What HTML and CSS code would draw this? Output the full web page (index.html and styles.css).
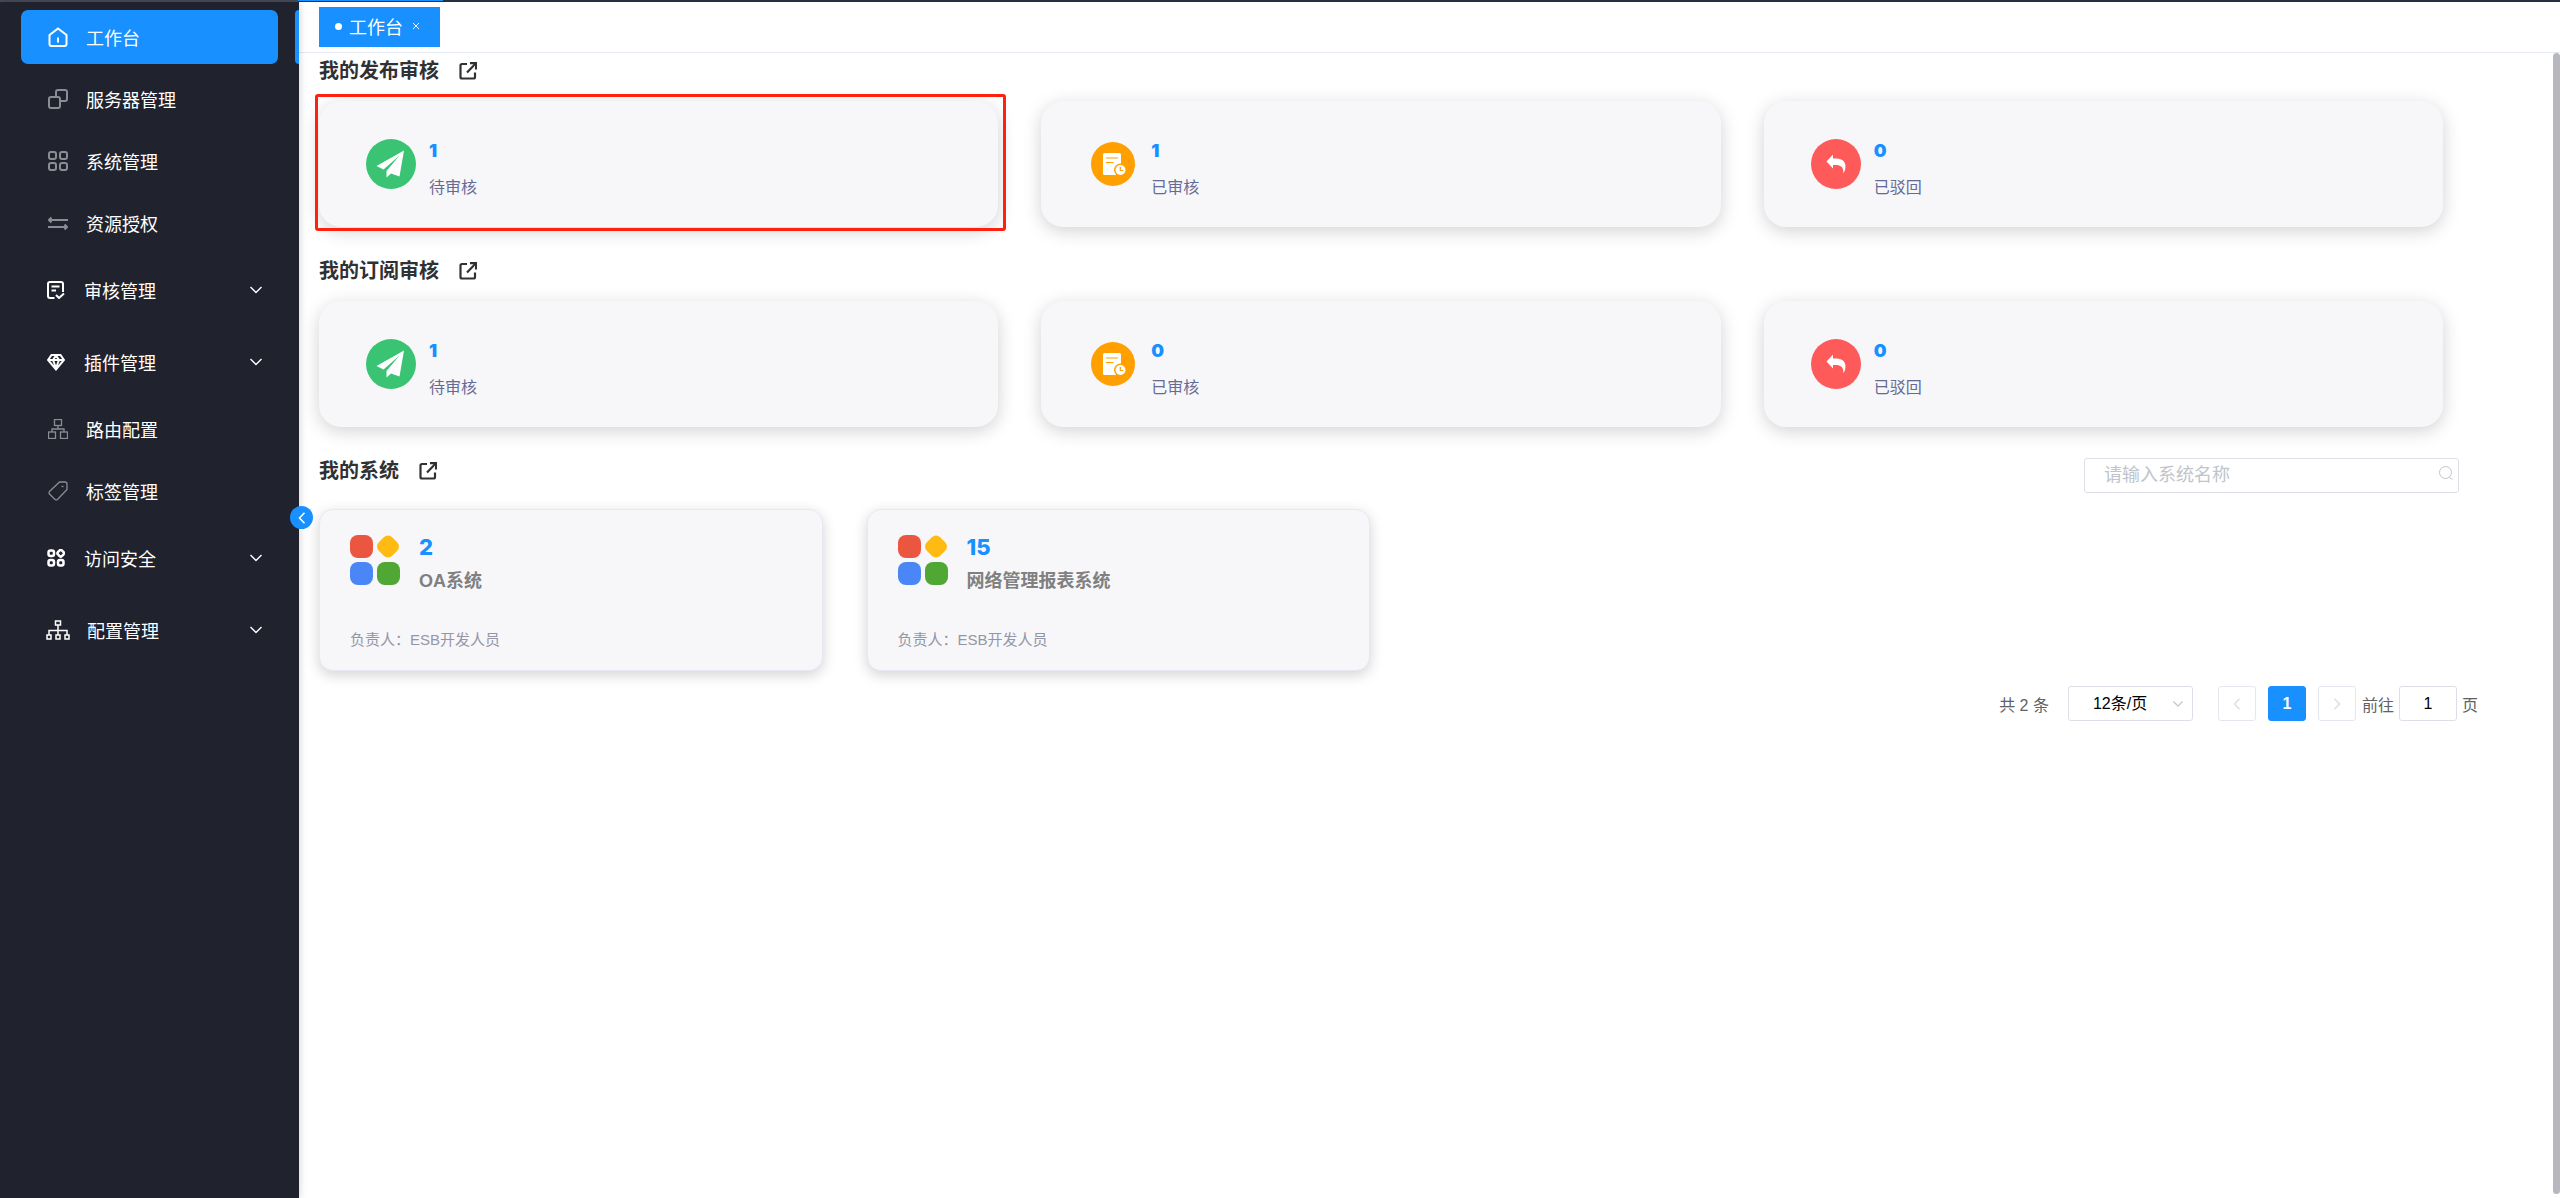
FILE: index.html
```html
<!DOCTYPE html>
<html lang="zh-CN">

<head>
	<meta charset="utf-8">
	<title>工作台</title>
	<link rel="stylesheet" href="styles.css">
</head>

<body>
	<svg class="defs" width="0" height="0">
		<symbol id="i-open" viewBox="0 0 18 18"><path d="M8 2H3Q1.500 2 1.500 3.500V15Q1.500 16.500 3 16.500H14.500Q16 16.500 16 15V10.500M11 1.200H17V7.500M16.500 1.800L8 10.500" fill="none" stroke="currentColor" stroke-width="2.200"/></symbol>
		<symbol id="i-down" viewBox="0 0 12 8"><path d="M.5 1L6 6.500L11.500 1" fill="none" stroke="currentColor" stroke-width="1.400"/></symbol>
		<symbol id="i-left" viewBox="0 0 8 12"><path d="M6.500 .8L1.500 6L6.500 11.200" fill="none" stroke="currentColor" stroke-width="1.500"/></symbol>
		<symbol id="i-right" viewBox="0 0 8 12"><path d="M1.500 .8L6.500 6L1.500 11.200" fill="none" stroke="currentColor" stroke-width="1.500"/></symbol>
		<symbol id="i-plane" viewBox="0 0 50 50"><circle cx="25" cy="25" r="25" fill="#3bc374"/><path d="M38 11.500L10.500 27L17.500 30.500L33.500 16.500L20.500 32V38.500L25 34.500L33.500 37.500Z" fill="#fff"/></symbol>
		<symbol id="i-doc" viewBox="0 0 44 44"><circle cx="22" cy="22" r="22" fill="#ffa000"/><rect x="12" y="11" width="18" height="22" rx="1.500" fill="#fff"/><path d="M15 16h12M15 20.500h7.500" stroke="#ffa000" stroke-width="1.200"/><circle cx="29.500" cy="28" r="6.500" fill="#ffa000"/><circle cx="29.500" cy="28" r="5" fill="#fff"/><path d="M29.300 25v3.500h3" fill="none" stroke="#ffa000" stroke-width="1.200"/></symbol>
		<symbol id="i-back" viewBox="0 0 50 50"><circle cx="25" cy="25" r="25" fill="#ff5a5a"/><path d="M15.500 22.500L22 15.500V19.500C29 19 34.500 20.500 34.500 27.500Q34.500 31.500 32.500 34.500C32.500 28 30.500 25.500 22 26V29.500Z" fill="#fff"/></symbol>
		<symbol id="i-apps" viewBox="0 0 50 50"><rect width="23" height="23" rx="8" fill="#eb5640"/><rect x="28.500" y="2" width="19" height="19" rx="6" fill="#ffbb12" transform="rotate(45 38 11.500)"/><rect y="27" width="23" height="23" rx="8" fill="#4a86f5"/><rect x="27" y="27" width="23" height="23" rx="8" fill="#50a733"/></symbol>
	</svg>

	<div class="topline"><span class="topline-side"></span><span class="topline-active"></span></div>
	<div class="layout">
		<nav class="sidebar">
			<a class="item active" href="#">
				<svg class="icon" viewBox="0 0 20 20"><path d="M1.500 8L10 1.500L18.500 8V17Q18.500 19 16.500 19H3.500Q1.500 19 1.500 17Z"/><path d="M10 10.500v5"/></svg>
				<span>工作台</span>
			</a>
			<a class="item dim" href="#">
				<svg class="icon" viewBox="0 0 20 20"><rect x="1" y="8" width="11" height="11" rx="2"/><path d="M8 8V3Q8 1 10 1H17Q19 1 19 3V10Q19 12 17 12H12"/></svg>
				<span>服务器管理</span>
			</a>
			<a class="item dim" href="#">
				<svg class="icon" viewBox="0 0 20 20"><rect x="1" y="1" width="7" height="7" rx="2"/><rect x="12" y="1" width="7" height="7" rx="2"/><rect x="1" y="12" width="7" height="7" rx="2"/><rect x="12" y="12" width="7" height="7" rx="2"/></svg>
				<span>系统管理</span>
			</a>
			<a class="item dim" href="#">
				<svg class="icon" viewBox="0 0 20 20"><path d="M1 7H20M3.500 4.500L1 7L3.500 9.500M0 14H19M16.500 11.500L19 14L16.500 16.500"/></svg>
				<span>资源授权</span>
			</a>
			<a class="item sub" href="#">
				<svg class="icon" viewBox="0 0 18 18"><path d="M7.500 17H3Q1 17 1 15V3Q1 1 3 1H14Q16 1 16 3V11M4.500 5.500H12.500M4.500 9.500H9M9 14L12 17L17 12.500"/></svg>
				<span>审核管理</span>
				<svg class="arrow"><use href="#i-down"/></svg>
			</a>
			<a class="item sub" href="#">
				<svg class="icon" viewBox="0 0 18 18"><path d="M4.500 2H13.500L17 7L9 16.500L1 7ZM1 7H17M6 7L9 15L12 7L9 2.500Z"/></svg>
				<span>插件管理</span>
				<svg class="arrow"><use href="#i-down"/></svg>
			</a>
			<a class="item dim" href="#">
				<svg class="icon thin" viewBox="0 0 20 20"><rect x="6.500" y=".5" width="7" height="6"/><rect x=".5" y="13" width="7" height="6.500"/><rect x="12.500" y="13" width="7" height="6.500"/><path d="M10 6.500V10M4 13V10H16V13"/></svg>
				<span>路由配置</span>
			</a>
			<a class="item dim" href="#">
				<svg class="icon thin" viewBox="0 0 20 20"><path d="M11.500 1H17Q19 1 19 3V8.500L9.500 18.500Q8 19.500 6.500 18L1.500 13Q.5 12 1.500 10.500Z"/><path d="M13.500 5.500h2"/></svg>
				<span>标签管理</span>
			</a>
			<a class="item sub" href="#">
				<svg class="icon bold" viewBox="0 0 18 18"><rect x="1.500" y="1.500" width="5.500" height="5.500" rx="2"/><rect x="11" y="1.500" width="5.500" height="5.500" rx="1.500" transform="rotate(45 13.750 4.250)"/><rect x="1.500" y="11" width="5.500" height="5.500" rx="2"/><rect x="11" y="11" width="5.500" height="5.500" rx="2"/></svg>
				<span>访问安全</span>
				<svg class="arrow"><use href="#i-down"/></svg>
			</a>
			<a class="item sub wide" href="#">
				<svg class="icon" viewBox="0 0 24 20"><rect x="9.500" y="1" width="5" height="4"/><rect x="1" y="15" width="4" height="4"/><rect x="10" y="15" width="4" height="4"/><rect x="19" y="15" width="4" height="4"/><path d="M12 5V15M3 15V10.500H21V15"/></svg>
				<span>配置管理</span>
				<svg class="arrow"><use href="#i-down"/></svg>
			</a>
			<span class="active-edge"></span>
			<button class="collapse" type="button" aria-label="收起菜单"><svg><use href="#i-left"/></svg></button>
		</nav>

		<div class="main">
			<header class="tabs">
				<a class="tab" href="#"><i class="dot"></i><span>工作台</span><svg class="close" viewBox="0 0 8 8"><path d="M1 1L7 7M7 1L1 7" stroke="currentColor"/></svg></a>
			</header>
			<main class="content">
				<section>
					<div class="head"><h2>我的发布审核</h2><a href="#" aria-label="打开"><svg class="open"><use href="#i-open"/></svg></a></div>
					<div class="stats">
						<div class="stat marked"><svg class="badge"><use href="#i-plane"/></svg><div><b>1</b><p>待审核</p></div></div>
						<div class="stat"><svg class="badge small"><use href="#i-doc"/></svg><div><b>1</b><p>已审核</p></div></div>
						<div class="stat"><svg class="badge"><use href="#i-back"/></svg><div><b>0</b><p>已驳回</p></div></div>
					</div>
				</section>
				<section>
					<div class="head"><h2>我的订阅审核</h2><a href="#" aria-label="打开"><svg class="open"><use href="#i-open"/></svg></a></div>
					<div class="stats">
						<div class="stat"><svg class="badge"><use href="#i-plane"/></svg><div><b>1</b><p>待审核</p></div></div>
						<div class="stat"><svg class="badge small"><use href="#i-doc"/></svg><div><b>0</b><p>已审核</p></div></div>
						<div class="stat"><svg class="badge"><use href="#i-back"/></svg><div><b>0</b><p>已驳回</p></div></div>
					</div>
				</section>
				<section>
					<div class="head">
						<h2>我的系统</h2><a href="#" aria-label="打开"><svg class="open"><use href="#i-open"/></svg></a>
						<div class="search">
							<input type="text" placeholder="请输入系统名称" aria-label="系统名称">
							<svg viewBox="0 0 14 14"><circle cx="6.500" cy="6.500" r="6"/><path d="M10.500 11.500L13.500 13.500"/></svg>
						</div>
					</div>
					<div class="systems">
						<div class="system">
							<div class="system-top"><svg><use href="#i-apps"/></svg><div><b>2</b><h3>OA系统</h3></div></div>
							<p>负责人：ESB开发人员</p>
						</div>
						<div class="system">
							<div class="system-top"><svg><use href="#i-apps"/></svg><div><b>15</b><h3>网络管理报表系统</h3></div></div>
							<p>负责人：ESB开发人员</p>
						</div>
					</div>
				</section>
				<div class="pager">
					<span>共 2 条</span>
					<div class="size">
						<select aria-label="每页条数"><option>12条/页</option></select>
						<svg><use href="#i-down"/></svg>
					</div>
					<div class="pages">
						<button type="button" disabled aria-label="上一页"><svg><use href="#i-left"/></svg></button>
						<button type="button" class="current">1</button>
						<button type="button" disabled aria-label="下一页"><svg><use href="#i-right"/></svg></button>
					</div>
					<label class="jump">前往<input type="text" value="1">页</label>
				</div>
				<div class="scrollbar"></div>
			</main>
		</div>
	</div>
</body>

</html>
```
FILE: styles.css
```css
* {
	box-sizing: border-box;
}

body {
	margin: 0;
	min-height: 100vh;
	display: flex;
	flex-direction: column;
	font-family: "Liberation Sans", "Noto Sans CJK SC", sans-serif;
	font-size: 16px;
	background: #fff;
}

a {
	color: inherit;
	text-decoration: none;
}

h2, h3, p {
	margin: 0;
}

button, input, select {
	font: inherit;
}

.defs {
	position: absolute;
}

.topline {
	display: flex;
	height: 2px;
	background: #283040;
}

.topline-side {
	width: 298px;
	background: #474c5a;
}

.topline-active {
	width: 145px;
	height: 1px;
	background: #1890ff;
}

.layout {
	flex: 1;
	display: flex;
}

/* sidebar */
.sidebar {
	position: relative;
	z-index: 1;
	display: flex;
	flex-direction: column;
	width: 299px;
	flex: none;
	padding: 4px 21px;
	background: #20222d;
	box-shadow: 0 0 8px rgba(0, 0, 0, .2);
	color: #fff;
	font-size: 18px;
}

.item {
	display: flex;
	align-items: center;
	height: 54px;
	margin: 4px 0;
	padding: 0 16px 0 27px;
	border-radius: 7px;
}

.item.active {
	background: #1890ff;
}

.item.sub {
	height: 72px;
	margin: 0;
	padding-left: 26px;
}

.item.wide {
	padding-left: 25px;
}

.icon {
	width: 20px;
	height: 20px;
	margin-right: 18px;
	fill: none;
	stroke: #fff;
	stroke-width: 2;
}

.dim .icon {
	stroke: #8b8d94;
}

.sub .icon {
	width: 18px;
	height: 18px;
	margin-right: 19px;
}

.icon.thin {
	stroke-width: 1.3;
}

.icon.bold {
	stroke-width: 2.5;
}

.wide .icon {
	width: 24px;
	height: 20px;
	margin-right: 17px;
	stroke-width: 1.5;
}

.arrow {
	width: 12px;
	height: 8px;
	margin-left: auto;
}

.active-edge {
	position: absolute;
	top: 8px;
	right: 0;
	width: 4px;
	height: 54px;
	border-radius: 4px 0 0 4px;
	background: #1890ff;
}

.collapse {
	position: absolute;
	top: 504px;
	right: -14px;
	display: flex;
	align-items: center;
	justify-content: center;
	width: 23px;
	height: 23px;
	padding: 0;
	border: 0;
	border-radius: 50%;
	background: #1890ff;
	color: #fff;
}

.collapse svg {
	width: 8px;
	height: 12px;
}

/* tabs */
.main {
	flex: 1;
	display: flex;
	flex-direction: column;
}

.tabs {
	height: 51px;
	padding: 5px 20px;
	border-bottom: 1px solid #e6eaf5;
}

.tab {
	display: inline-flex;
	align-items: center;
	height: 40px;
	padding: 0 20px 2px 16px;
	background: #1890ff;
	color: #fff;
	font-size: 18px;
}

.dot {
	width: 7px;
	height: 7px;
	margin-right: 7px;
	border-radius: 50%;
	background: #fff;
}

.close {
	width: 8px;
	height: 8px;
	margin-left: 9px;
}

/* content */
.content {
	position: relative;
	flex: 1;
	padding-left: 20px;
}

.head {
	display: flex;
	align-items: center;
	height: 35px;
	margin-right: 101px;
	color: #303133;
}

.head h2 {
	font-size: 20px;
	line-height: 30px;
}

.open {
	display: block;
	width: 18px;
	height: 18px;
	margin-left: 20px;
}

.stats {
	display: grid;
	grid-template-columns: repeat(3, 1fr);
	gap: 43px;
	margin: 13px 117px 26px 0;
}

.stat {
	position: relative;
	display: flex;
	align-items: center;
	gap: 13px;
	height: 126px;
	padding: 0 47px;
	border-radius: 22px;
	background: #f7f7fa;
	box-shadow: 0 4px 18px rgba(0, 0, 0, .18);
}

.stat b {
	display: block;
	margin-top: 12px;
	color: #1890ff;
	font-family: Inter, sans-serif;
	font-size: 18px;
	font-weight: 900;
	line-height: 24px;
}

.stat p {
	margin-top: 12px;
	color: #666b94;
	line-height: 26px;
}

.stat.marked::after {
	content: "";
	position: absolute;
	inset: -7px -8px -4px -4px;
	border: 3px solid #ff2010;
	border-radius: 3px;
}

.badge {
	width: 50px;
	height: 50px;
}

.badge.small {
	width: 44px;
	height: 44px;
	margin: 0 3px;
}

.search {
	position: relative;
	width: 375px;
	margin-top: 10px;
	margin-left: auto;
}

.search input {
	display: block;
	width: 100%;
	height: 35px;
	padding: 0 19px;
	border: 1px solid #dcdfe6;
	border-radius: 3px;
	font-size: 18px;
}

.search input::placeholder {
	color: #c0c4cc;
}

.search svg {
	position: absolute;
	top: 8px;
	right: 6px;
	width: 14px;
	height: 14px;
	fill: none;
	stroke: #c0c4cc;
}

.systems {
	display: grid;
	grid-template-columns: repeat(4, 1fr);
	gap: 44px;
	margin: 21px 95px 15px 0;
}

.system {
	height: 162px;
	padding: 25px 30px;
	border: 1px solid #e8e8f2;
	border-radius: 14px;
	background: #f7f7fa;
	box-shadow: 0 4px 14px rgba(0, 0, 0, .18);
}

.system-top {
	display: flex;
	gap: 19px;
}

.system-top svg {
	width: 50px;
	height: 50px;
}

.system b {
	display: block;
	color: #1890ff;
	font-family: Inter, sans-serif;
	font-size: 22px;
	font-weight: 800;
	line-height: 24px;
}

.system h3 {
	margin-top: 8px;
	color: #808080;
	font-size: 18px;
	line-height: 28px;
}

.system p {
	margin-top: 33px;
	color: #9496a5;
	font-size: 15px;
	line-height: 24px;
}

/* pagination */
.pager {
	display: flex;
	align-items: center;
	justify-content: flex-end;
	height: 35px;
	margin-right: 82px;
	color: #606266;
}

.size {
	position: relative;
	margin: 0 25px 0 19px;
}

.size select {
	display: block;
	width: 125px;
	height: 35px;
	padding: 0 24px;
	border: 1px solid #dcdfe6;
	border-radius: 3px;
	background: #fff;
	color: #000;
	appearance: none;
}

.size svg {
	position: absolute;
	top: 14px;
	right: 10px;
	width: 10px;
	height: 8px;
	color: #c0c4cc;
}

.pages {
	display: flex;
	gap: 12px;
}

.pages button {
	display: flex;
	align-items: center;
	justify-content: center;
	width: 38px;
	height: 35px;
	padding: 0;
	border: 1px solid #e4e7ed;
	border-radius: 3px;
	background: #fff;
	color: #dcdfe6;
}

.pages svg {
	width: 8px;
	height: 12px;
}

.pages .current {
	border-color: #1890ff;
	background: #1890ff;
	color: #fff;
	font-weight: bold;
}

.jump {
	display: flex;
	align-items: center;
	margin-left: 6px;
}

.jump input {
	width: 58px;
	height: 35px;
	margin: 0 5px;
	border: 1px solid #dcdfe6;
	border-radius: 3px;
	text-align: center;
}

.scrollbar {
	position: absolute;
	top: 0;
	right: 0;
	bottom: 4px;
	width: 7px;
	border-radius: 4px;
	background: #b7b8be;
}
```
